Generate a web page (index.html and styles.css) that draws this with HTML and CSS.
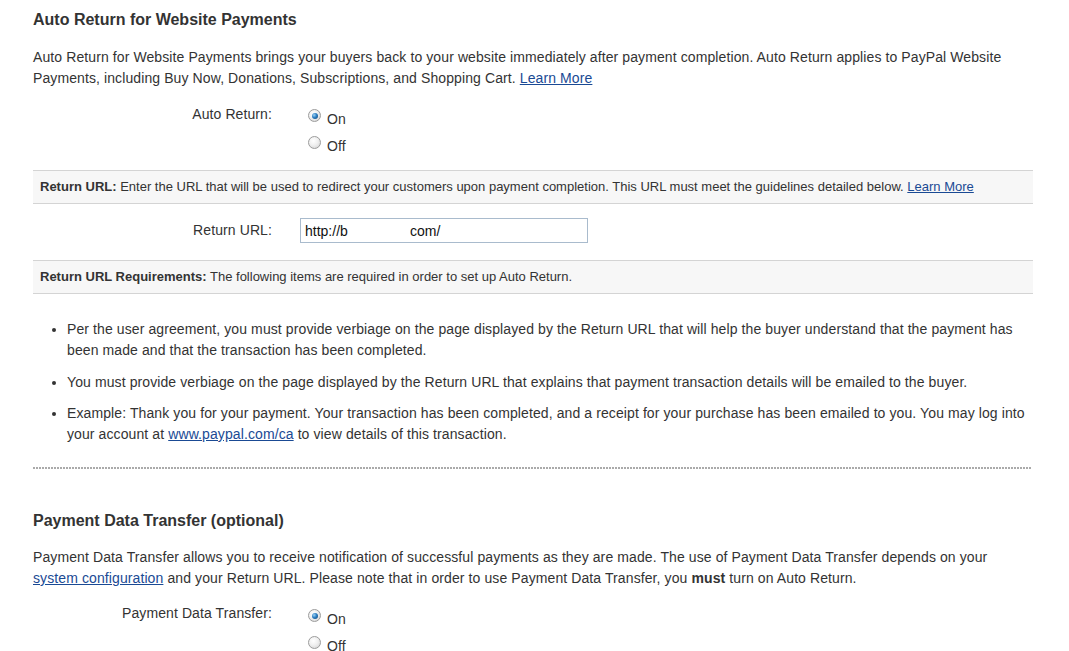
FILE: index.html
```html
<!DOCTYPE html>
<html>
<head>
<meta charset="utf-8">
<link rel="stylesheet" href="styles.css">
</head>
<body>
<div class="page">
  <section class="section">
    <h2 class="title">Auto Return for Website Payments</h2>
    <p class="intro">Auto Return for Website Payments brings your buyers back to your website immediately after payment completion. Auto Return applies to PayPal Website Payments, including Buy Now, Donations, Subscriptions, and Shopping Cart. <a href="#" class="link">Learn More</a></p>
    <div class="form-row">
      <div class="label">Auto Return:</div>
      <div class="options">
        <label class="option"><input type="radio" name="ar" class="radio" checked><span>On</span></label>
        <label class="option"><input type="radio" name="ar" class="radio"><span>Off</span></label>
      </div>
    </div>
    <div class="bar"><b>Return URL:</b> Enter the URL that will be used to redirect your customers upon payment completion. This URL must meet the guidelines detailed below. <a href="#" class="link">Learn More</a></div>
    <div class="url-row">
      <div class="label">Return URL:</div>
      <input type="text" class="text-input" value="http://b                com/">
    </div>
    <div class="bar"><b>Return URL Requirements:</b> The following items are required in order to set up Auto Return.</div>
    <ul class="reqs">
      <li>Per the user agreement, you must provide verbiage on the page displayed by the Return URL that will help the buyer understand that the payment has been made and that the transaction has been completed.</li>
      <li>You must provide verbiage on the page displayed by the Return URL that explains that payment transaction details will be emailed to the buyer.</li>
      <li>Example: Thank you for your payment. Your transaction has been completed, and a receipt for your purchase has been emailed to you. You may log into your account at <a href="#" class="link">www.paypal.com/ca</a> to view details of this transaction.</li>
    </ul>
    <div class="divider"></div>
  </section>
  <section class="section second">
    <h2 class="title">Payment Data Transfer (optional)</h2>
    <p class="intro">Payment Data Transfer allows you to receive notification of successful payments as they are made. The use of Payment Data Transfer depends on your <a href="#" class="link">system configuration</a> and your Return URL. Please note that in order to use Payment Data Transfer, you <b>must</b> turn on Auto Return.</p>
    <div class="form-row">
      <div class="label">Payment Data Transfer:</div>
      <div class="options">
        <label class="option"><input type="radio" name="pdt" class="radio" checked><span>On</span></label>
        <label class="option"><input type="radio" name="pdt" class="radio"><span>Off</span></label>
      </div>
    </div>
  </section>
</div>
</body>
</html>
```

FILE: styles.css
```css
html, body {
  margin: 0;
  padding: 0;
  background: #fff;
}
body {
  font-family: "Liberation Sans", Arial, sans-serif;
  color: #333;
  font-size: 14px;
  line-height: 21px;
  letter-spacing: 0.1px;
}
.page {
  width: 1000px;
  padding: 10px 0 0 33px;
}
.title {
  font-size: 16px;
  line-height: 20px;
  font-weight: bold;
  margin: 0 0 17px;
  color: #333;
  letter-spacing: 0;
}
.intro {
  margin: 0;
}
.link {
  color: #1a4a94;
  text-decoration: underline;
}
.form-row {
  display: grid;
  grid-template-columns: 239px 1fr;
  column-gap: 36px;
  margin-top: 13px;
}
.label {
  text-align: right;
}
.form-row .label {
  padding-top: 2px;
}
.options {
  display: flex;
  flex-direction: column;
  gap: 6px;
  padding-top: 7px;
}
.option {
  display: flex;
  align-items: flex-start;
  gap: 6px;
  line-height: 21px;
}
.radio {
  appearance: none;
  -webkit-appearance: none;
  margin: 0;
  width: 13px;
  height: 13px;
  border-radius: 50%;
  border: 1px solid #9c9c9c;
  background: radial-gradient(circle at 40% 35%, #ffffff 0%, #f0f0f0 45%, #cfcfcf 100%);
  box-sizing: border-box;
  position: relative;
  flex: none;
}
.radio:checked::after {
  content: "";
  position: absolute;
  left: 2.5px;
  top: 2.5px;
  width: 6px;
  height: 6px;
  border-radius: 50%;
  background: radial-gradient(circle at 35% 35%, #9fd3f5 0%, #2b7ec2 45%, #0d3f6e 100%);
}
.bar {
  margin-top: 13px;
  background: #f7f7f7;
  border-top: 1px solid #d4d4d4;
  border-bottom: 1px solid #d4d4d4;
  height: 32px;
  line-height: 32px;
  padding: 0 7px;
  font-size: 13px;
  letter-spacing: 0;
  white-space: nowrap;
}
.url-row {
  display: grid;
  grid-template-columns: 239px 288px;
  column-gap: 28px;
  align-items: center;
  margin: 14px 0 17px;
}
.text-input {
  box-sizing: border-box;
  height: 25px;
  width: 288px;
  border: 1px solid #a9bbcd;
  padding: 0 4px;
  font-family: "Liberation Sans", Arial, sans-serif;
  font-size: 14px;
  color: #111;
  outline: none;
  margin: 0;
}
.reqs {
  margin: 25px 0 0;
  padding: 0 0 0 34px;
}
.reqs li {
  margin-bottom: 10.5px;
}
.reqs li:last-child {
  margin-bottom: 0;
}
.divider {
  margin-top: 22px;
  height: 2px;
  width: 999px;
  background: repeating-linear-gradient(to right, #aaaaaa 0 2px, transparent 2px 3px);
}
.second {
  padding-top: 42px;
}
.second .title {
  margin-bottom: 16px;
}
.second .form-row .label {
  padding-top: 1px;
}
```
